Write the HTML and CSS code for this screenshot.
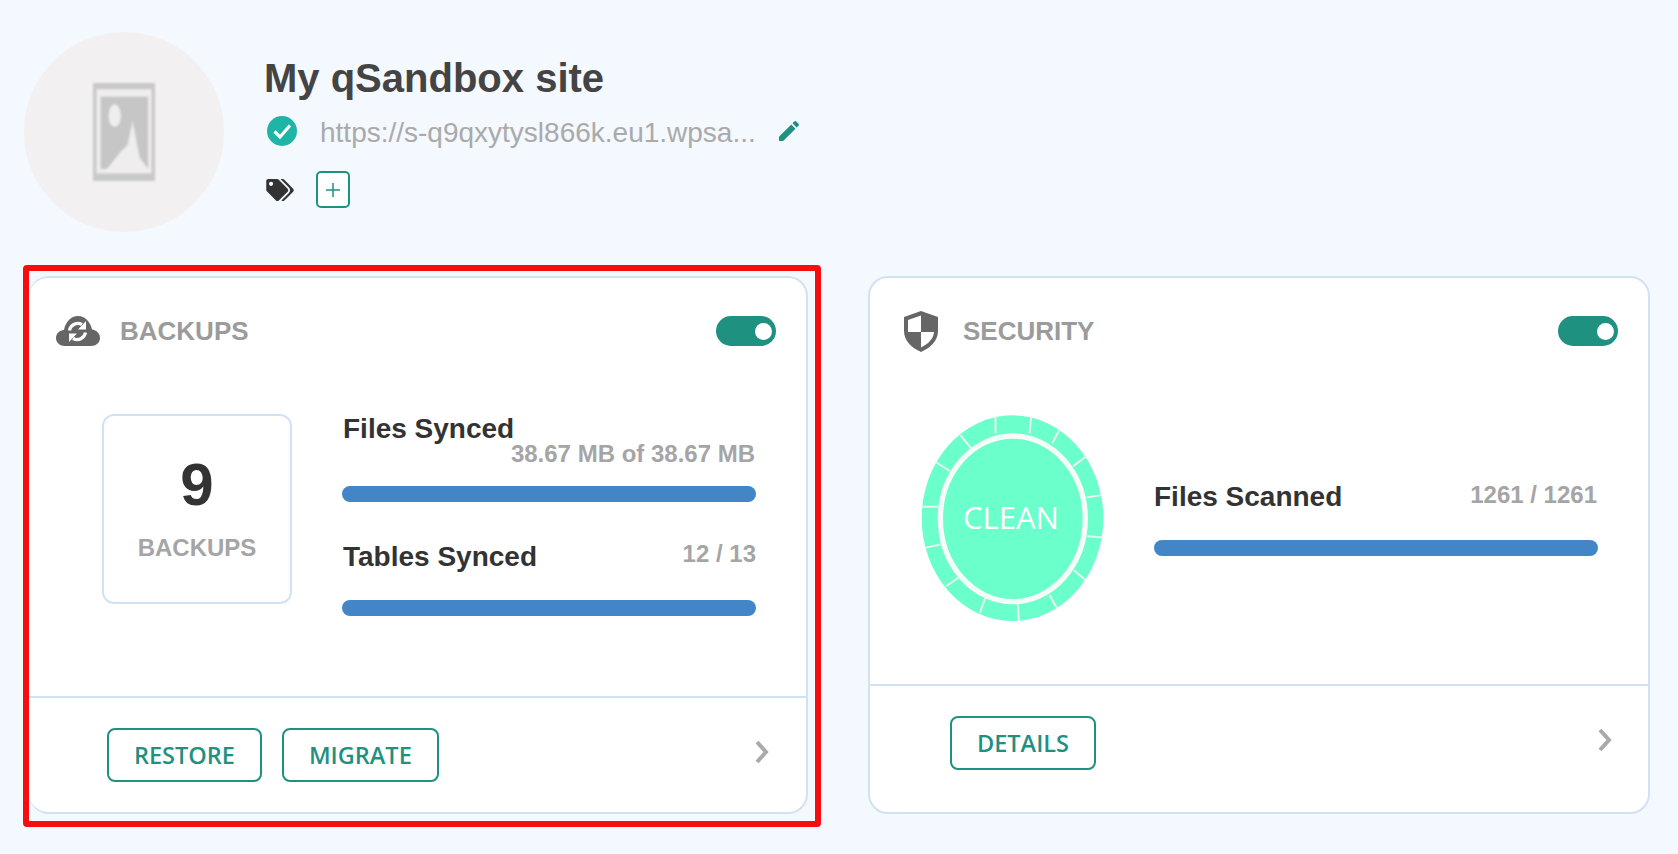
FILE: index.html
```html
<!DOCTYPE html>
<html lang="en">
<head>
    <meta charset="UTF-8">
    <meta name="viewport" content="width=device-width, initial-scale=1.0">
    <title>My qSandbox site</title>
    <link rel="stylesheet" href="styles.css">
</head>
<body>
    <div class="page">
        <header class="site-head">
            <div class="avatar">
                <svg class="placeholder" viewBox="40 35 180 285" width="62" height="98">
                    <rect x="40" y="35" width="180" height="285" fill="#c9c9c9"/>
                    <rect x="50" y="53" width="160" height="245" fill="#efeded"/>
                    <rect x="62" y="75" width="138" height="210" fill="#c6c6c6"/>
                    <ellipse cx="103" cy="130" rx="18" ry="33" fill="#efeded"/>
                    <path d="M80 285 L120 235 L140 215 L155 145 L175 250 L200 285 Z" fill="#efeded"/>
                </svg>
            </div>
            <div class="site-info">
                <h1 class="site-title">My qSandbox site</h1>
                <div class="url-row">
                    <svg class="check-icon" viewBox="0 0 30 30" width="30" height="30">
                        <circle cx="15" cy="15" r="15" fill="#1fb5a6"/>
                        <path d="M7.5 15.5 L13 21 L23 9.5" fill="none" stroke="#fff" stroke-width="3.2"/>
                    </svg>
                    <span class="site-url">https://s-q9qxytysl866k.eu1.wpsa...</span>
                    <svg class="edit-icon" viewBox="3 3 18 18" width="20" height="20">
                        <path d="M3 17.25V21h3.75L17.81 9.94l-3.75-3.75L3 17.25zM20.71 7.04a1 1 0 0 0 0-1.41l-2.34-2.34a1 1 0 0 0-1.41 0l-1.83 1.83 3.75 3.75 1.83-1.83z" fill="#1f9180"/>
                    </svg>
                </div>
                <div class="tag-row">
                    <svg class="tag-icon" viewBox="0 0 640 512" width="28" height="22">
                        <path d="M497.941 225.941L286.059 14.059A48 48 0 0 0 252.118 0H48C21.49 0 0 21.49 0 48v204.118a48 48 0 0 0 14.059 33.941l211.882 211.882c18.744 18.745 49.136 18.746 67.882 0l204.118-204.118c18.745-18.745 18.745-49.137 0-67.882zM112 160c-26.51 0-48-21.49-48-48s21.49-48 48-48 48 21.49 48 48-21.49 48-48 48zm513.941 133.823L421.823 497.941c-18.745 18.745-49.137 18.745-67.882 0l-.36-.36L527.64 323.522c16.999-16.999 26.36-39.6 26.36-63.64s-9.362-46.641-26.36-63.64L331.397 0h48.721a48 48 0 0 1 33.941 14.059l211.882 211.882c18.745 18.745 18.745 49.137 0 67.882z" fill="#333"/>
                    </svg>
                    <div class="add-tag">
                        <svg viewBox="0 0 14 14" width="14" height="14">
                            <path d="M7 0V14M0 7H14" stroke="#1f9180" stroke-width="1.5"/>
                        </svg>
                    </div>
                </div>
            </div>
        </header>

        <div class="cards">
            <div class="highlight">
                <section class="card">
                    <div class="card-head backups-head">
                        <svg class="cloud-icon" viewBox="0 0 44 30" width="44" height="30">
                            <path d="M9 30C4 30 0 26.5 0 22C0 17.5 3.5 14.5 8 14C9.5 6 15 0 22 0C29 0 34.5 6 36 13.5C40.5 14 44 17.5 44 22C44 26.5 40 30 35 30Z" fill="#666"/>
                            <path d="M13.5 14.5A8.5 8.5 0 0 1 26 8.5M29.5 16.5A8.5 8.5 0 0 1 17 22.5" fill="none" stroke="#fff" stroke-width="3.2"/>
                            <path d="M30 5V13.5H22ZM13 26V17.5H21Z" fill="#fff"/>
                        </svg>
                        <h2 class="card-title">BACKUPS</h2>
                        <div class="toggle"><span class="knob"></span></div>
                    </div>
                    <div class="card-body backups-body">
                        <div class="count-box">
                            <div class="count">9</div>
                            <div class="count-label">BACKUPS</div>
                        </div>
                        <div class="sync-col">
                            <div class="stat-name">Files Synced</div>
                            <div class="stat-value files-value">38.67 MB of 38.67 MB</div>
                            <div class="bar files-bar"></div>
                            <div class="stat-row tables-row">
                                <div class="stat-name">Tables Synced</div>
                                <div class="stat-value">12 / 13</div>
                            </div>
                            <div class="bar tables-bar"></div>
                        </div>
                    </div>
                    <div class="card-foot backups-foot">
                        <a class="btn">RESTORE</a>
                        <a class="btn">MIGRATE</a>
                        <svg class="chevron" viewBox="0 0 14 24" width="14" height="24">
                            <path d="M2 2L11 12L2 22" fill="none" stroke="#aaa" stroke-width="4"/>
                        </svg>
                    </div>
                </section>
            </div>

            <section class="card security-card">
                <div class="card-head security-head">
                    <svg class="shield-icon" viewBox="0 0 34 41" width="34" height="41">
                        <path d="M17 0L34 6V20C34 30 26 37 17 41C8 37 0 30 0 20V6Z" fill="#666"/>
                        <path d="M4 9L17 4.5V21H4ZM17 21H30C29.5 28 24 33 17 36.5Z" fill="#fff"/>
                    </svg>
                    <h2 class="card-title">SECURITY</h2>
                    <div class="toggle"><span class="knob"></span></div>
                </div>
                <div class="card-body security-body">
                    <div class="clean-badge">
                        <svg viewBox="122 405 548 620" width="183" height="207">
                            <ellipse cx="396" cy="714" rx="272" ry="308" fill="#6affcb"/>
                            <ellipse cx="397" cy="716" rx="217" ry="248" fill="none" stroke="#f4fbf8" stroke-width="16"/>
                            <g stroke="#e9f5f0" stroke-width="6">
                                <path d="M345 408L345 460M452 408L447 460M535 452L515 490M618 528L578 558M662 645L618 652M667 772L620 768M615 900L580 870M530 985L507 945M415 1024L412 970M298 998L317 945M197 918L237 890M133 803L180 793M123 680L172 680M165 545L207 572M240 465L272 505"/>
                            </g>
                        </svg>
                        <span class="clean-text">CLEAN</span>
                    </div>
                    <div class="scan-col">
                        <div class="stat-row">
                            <div class="stat-name">Files Scanned</div>
                            <div class="stat-value">1261 / 1261</div>
                        </div>
                        <div class="bar scan-bar"></div>
                    </div>
                </div>
                <div class="card-foot security-foot">
                    <a class="btn">DETAILS</a>
                    <svg class="chevron" viewBox="0 0 14 24" width="14" height="24">
                        <path d="M2 2L11 12L2 22" fill="none" stroke="#aaa" stroke-width="4"/>
                    </svg>
                </div>
            </section>
        </div>
    </div>
</body>
</html>
```

FILE: styles.css
```css
body {
    font-family: "Liberation Sans", Arial, sans-serif;
    background-color: #f4f8ff;
    margin: 0;
    height: 854px;
    overflow: hidden;
}

.page {
    padding: 32px 0 0 23px;
}

.site-head {
    display: flex;
    height: 200px;
}

.avatar {
    width: 200px;
    height: 200px;
    margin-left: 1px;
    border-radius: 50%;
    background-color: #f2f0f0;
    display: flex;
    align-items: center;
    justify-content: center;
}

.placeholder {
    filter: blur(1px);
}

.site-info {
    margin-left: 40px;
    padding-top: 23px;
}

.site-title {
    margin: 0;
    font-size: 40px;
    line-height: 46px;
    font-weight: bold;
    color: #444444;
}

.url-row {
    display: flex;
    align-items: center;
    height: 30px;
    margin-top: 15px;
    padding-left: 3px;
}

.site-url {
    margin-left: 23px;
    padding-top: 4px;
    font-size: 28px;
    color: #aaaaaa;
}

.edit-icon {
    margin-left: 23px;
    margin-top: -1px;
}

.tag-row {
    display: flex;
    align-items: center;
    height: 37px;
    margin-top: 25px;
    padding-left: 2px;
}

.add-tag {
    width: 34px;
    height: 37px;
    box-sizing: border-box;
    margin-left: 22px;
    border: 2px solid #1f9180;
    border-radius: 5px;
    background-color: #ffffff;
    display: flex;
    align-items: center;
    justify-content: center;
}

.cards {
    display: flex;
    align-items: flex-start;
    margin-top: 33px;
}

.highlight {
    width: 798px;
    height: 562px;
    box-sizing: border-box;
    border: 6px solid #f60d0d;
    border-radius: 4px;
    padding: 5px 7px 7px 0;
}

.card {
    height: 100%;
    box-sizing: border-box;
    border: 2px solid #d2e2f5;
    border-radius: 20px;
    background-color: #ffffff;
    display: flex;
    flex-direction: column;
}

.highlight .card {
    border-left: 0;
}

.security-card {
    width: 782px;
    height: 538px;
    margin: 11px 0 0 47px;
}

.card-head {
    display: flex;
    align-items: center;
    height: 105px;
    flex: none;
    box-sizing: border-box;
    padding-top: 1px;
}

.backups-head {
    padding-left: 27px;
    padding-right: 30px;
}

.security-head {
    padding-left: 34px;
    padding-right: 30px;
}

.card-title {
    margin: 0;
    font-size: 26px;
    font-weight: bold;
    color: #9b9b9b;
}

.backups-head .card-title {
    margin-left: 20px;
}

.security-head .card-title {
    margin-left: 25px;
}

.toggle {
    width: 60px;
    height: 30px;
    margin-left: auto;
    border-radius: 15px;
    background-color: #1f9180;
    display: flex;
    align-items: center;
    justify-content: flex-end;
    padding-right: 4px;
    box-sizing: border-box;
}

.knob {
    width: 17px;
    height: 17px;
    border-radius: 50%;
    background-color: #ffffff;
}

.card-body {
    display: flex;
    flex: none;
}

.backups-body {
    height: 313px;
    padding: 31px 0 0 73px;
    box-sizing: border-box;
}

.security-body {
    height: 301px;
    padding: 32px 0 0 51px;
    box-sizing: border-box;
}

.count-box {
    width: 190px;
    height: 190px;
    box-sizing: border-box;
    border: 2px solid #d2e2f5;
    border-radius: 12px;
    text-align: center;
}

.count {
    margin-top: 34px;
    font-size: 60px;
    line-height: 70px;
    font-weight: bold;
    color: #333333;
}

.count-label {
    margin-top: 13px;
    font-size: 24px;
    line-height: 30px;
    font-weight: bold;
    color: #a5a5a5;
}

.sync-col {
    width: 414px;
    margin: -1px 0 0 50px;
}

.scan-col {
    width: 444px;
    margin: 66px 0 0 50px;
}

.stat-name {
    font-size: 28px;
    line-height: 32px;
    font-weight: bold;
    color: #333333;
    padding-left: 1px;
}

.scan-col .stat-name {
    padding-left: 0;
}

.stat-value {
    font-size: 24px;
    line-height: 28px;
    font-weight: bold;
    color: #a5a5a5;
    text-align: right;
    padding-right: 1px;
}

.files-value {
    margin-top: -5px;
}

.stat-row {
    display: flex;
    align-items: center;
    justify-content: space-between;
}

.stat-row .stat-value {
    margin-top: -5px;
}

.tables-row {
    margin-top: 39px;
}

.tables-row .stat-value {
    margin-top: -7px;
    padding-right: 0;
}

.bar {
    height: 16px;
    border-radius: 8px;
    background-color: #4286c8;
}

.files-bar {
    margin-top: 18px;
}

.tables-bar {
    margin-top: 27px;
}

.scan-bar {
    margin-top: 27px;
}

.clean-badge {
    position: relative;
    width: 183px;
    height: 207px;
    flex: none;
    display: flex;
    align-items: center;
    justify-content: center;
    padding-bottom: 4px;
    box-sizing: border-box;
}

.clean-badge svg {
    position: absolute;
    left: 0;
    top: 0;
}

.clean-text {
    position: relative;
    margin-right: 3px;
    font-family: "Open Sans", sans-serif;
    font-size: 31px;
    color: #ffffff;
}

.card-foot {
    flex: 1;
    display: flex;
    align-items: flex-start;
    border-top: 2px solid #d2e2f5;
    padding-top: 30px;
}

.backups-foot {
    padding-left: 78px;
    padding-right: 37px;
}

.security-foot {
    padding-left: 80px;
    padding-right: 36px;
}

.btn {
    height: 54px;
    box-sizing: border-box;
    padding: 0 25px;
    border: 2px solid #1f9180;
    border-radius: 8px;
    margin-right: 20px;
    font-family: "Open Sans", sans-serif;
    font-size: 23.5px;
    font-weight: 600;
    line-height: 50px;
    color: #1f9180;
}

.chevron {
    margin-left: auto;
    margin-top: 12px;
}
```
